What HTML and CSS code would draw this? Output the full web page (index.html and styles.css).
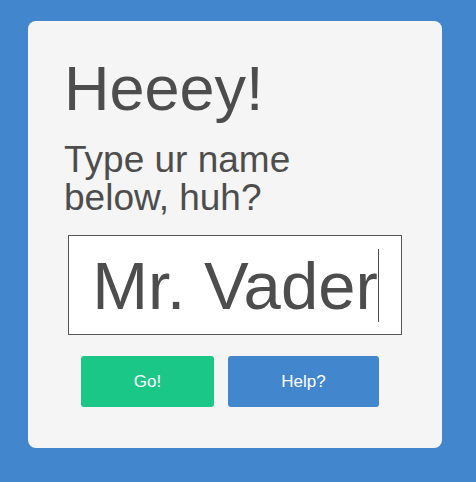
FILE: index.html
```html
<!DOCTYPE html>
<html>
<head>
<meta charset="utf-8">
<link rel="stylesheet" href="styles.css">
</head>
<body>
<div class="card">
  <h1 class="title">Heeey!</h1>
  <h2 class="subtitle">Type ur name<br>below, huh?</h2>
  <div class="field"><span class="value">Mr. Vader</span><span class="caret"></span></div>
  <div class="actions">
    <button class="btn btn-go">Go!</button>
    <button class="btn btn-help">Help?</button>
  </div>
</div>
</body>
</html>
```
FILE: styles.css
```css
html, body {
  margin: 0;
  padding: 0;
}
body {
  background: #4286ce;
  width: 476px;
  height: 482px;
  padding: 21px 0 0 28px;
  box-sizing: border-box;
  font-family: "Liberation Sans", Arial, sans-serif;
  color: #4d4d4d;
}
.card {
  width: 414px;
  height: 427px;
  box-sizing: border-box;
  background: #f5f5f5;
  border-radius: 8px;
  padding: 30px 0 0 36px;
}
.title {
  margin: 0;
  font-size: 63px;
  font-weight: normal;
  line-height: 74px;
  height: 74px;
}
.subtitle {
  margin: 16px 0 0 0;
  font-size: 37px;
  font-weight: normal;
  line-height: 37.5px;
}
.field {
  margin: 19px 0 0 4px;
  width: 334px;
  height: 100px;
  box-sizing: border-box;
  border: 1px solid #555;
  background: #fff;
  display: flex;
  align-items: center;
  justify-content: center;
  font-size: 67px;
  line-height: 77px;
}
.value {
  display: inline-block;
}
.caret {
  display: inline-block;
  width: 0;
  height: 73px;
  border-left: 1px solid #4d4d4d;
  margin-left: 0;
  margin-right: -1px;
}
.actions {
  display: flex;
  gap: 14px;
  margin: 21px 0 0 17px;
}
.btn {
  border: none;
  border-radius: 3px;
  height: 51px;
  color: #fff;
  font-family: "Liberation Sans", Arial, sans-serif;
  font-size: 17px;
  padding: 0;
}
.btn-go {
  width: 133px;
  background: #1bc787;
}
.btn-help {
  width: 151px;
  background: #4286ce;
}
```
